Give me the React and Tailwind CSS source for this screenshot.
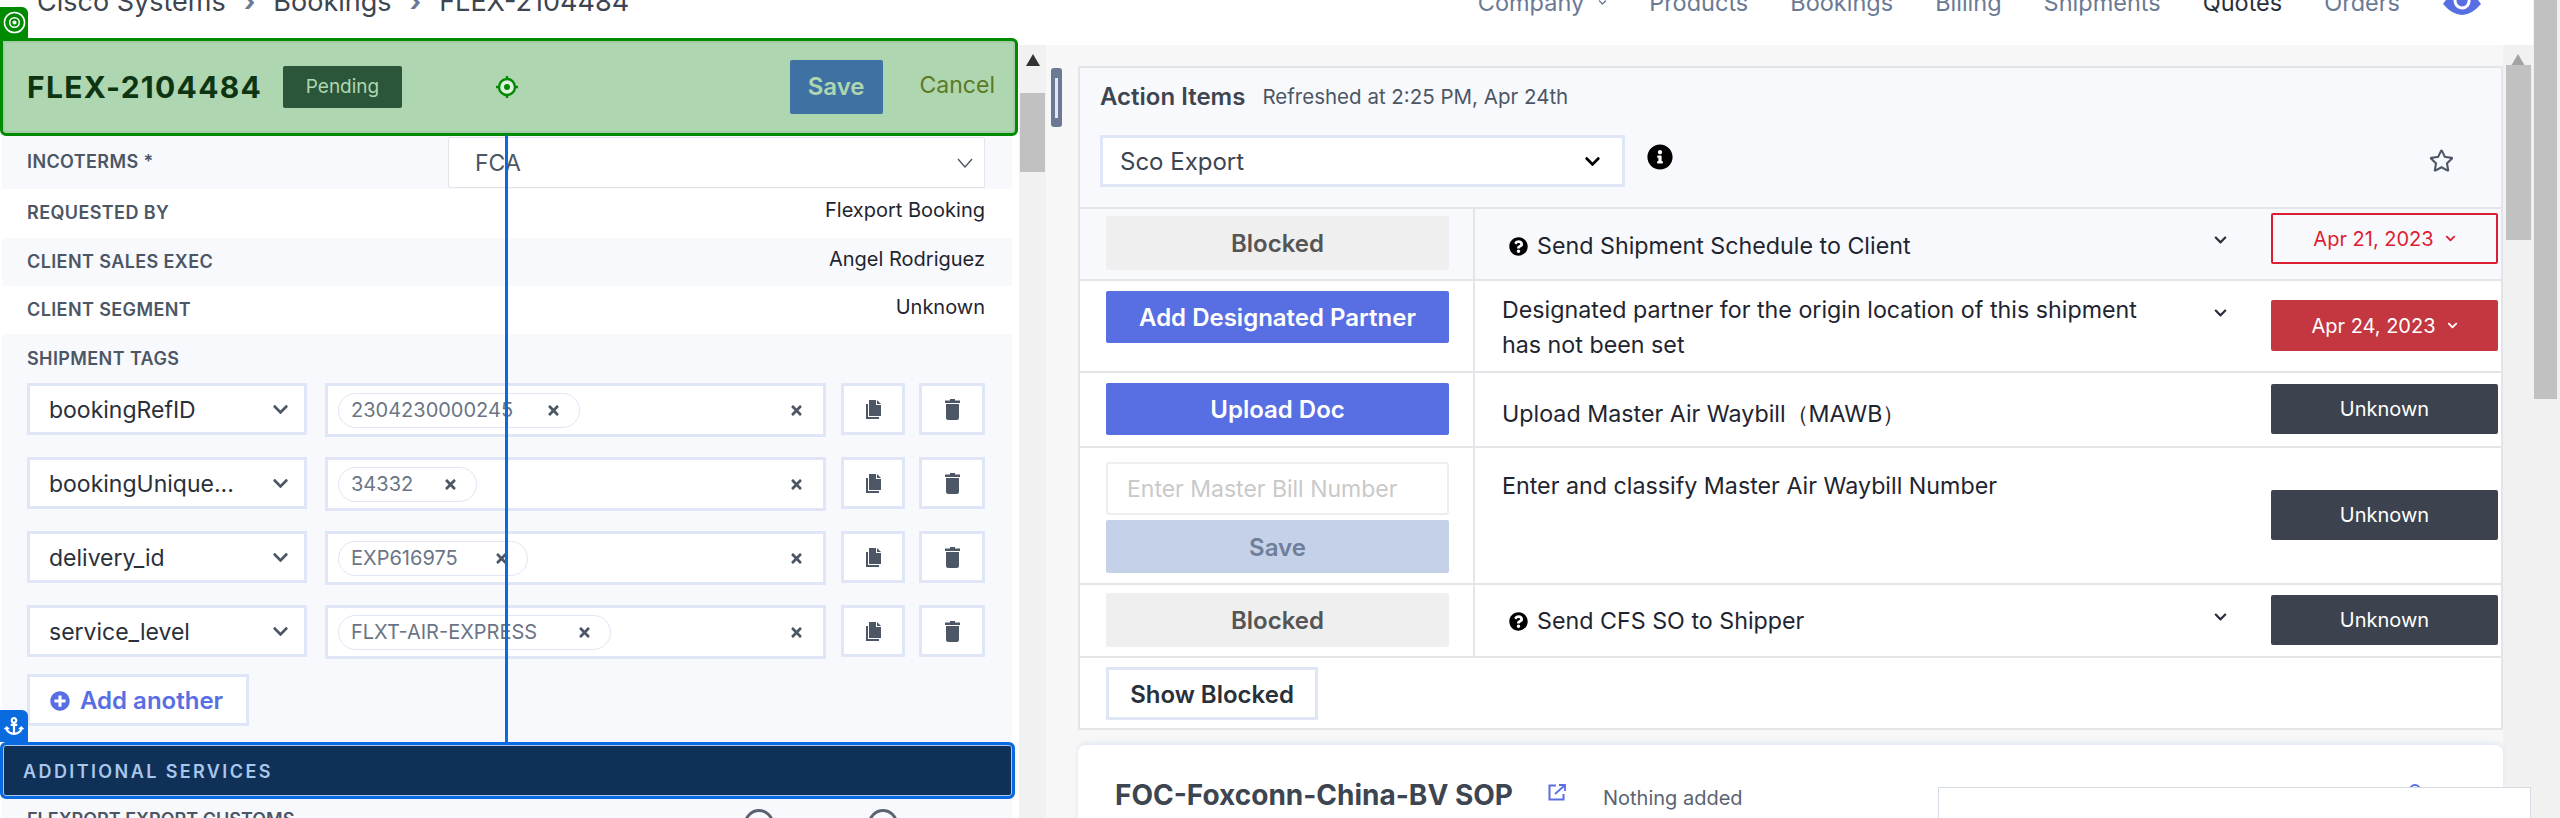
import { FaAnchor, FaChevronDown, FaInfoCircle, FaPlusCircle, FaQuestionCircle, FaRegStar, FaTimes } from 'react-icons/fa';

const navItems = ['Products', 'Bookings', 'Billing', 'Shipments'];

const tagRows = [
    { name: 'bookingRefID', value: '2304230000245', chip: 'w-[242px]' },
    { name: 'bookingUnique...', value: '34332', chip: 'w-[139px]' },
    { name: 'delivery_id', value: 'EXP616975', chip: 'w-[190px]' },
    { name: 'service_level', value: 'FLXT-AIR-EXPRESS', chip: 'w-[273px]' },
];

function Thin({ className = '' }) {
    return (
        <svg viewBox="0 0 16 10" className={className} fill="none" stroke="currentColor" strokeWidth="1.4">
            <path d="M1 1l7 8 7-8" />
        </svg>
    );
}

function Target({ className = '' }) {
    return (
        <svg viewBox="0 0 24 24" className={className} fill="none" stroke="currentColor">
            <circle cx="12" cy="12" r="8" strokeWidth="2.4" fill="#dff0df" />
            <circle cx="12" cy="12" r="3" fill="currentColor" stroke="none" />
            <path d="M12 1v3M12 20v3M1 12h3M20 12h3" strokeWidth="2.4" />
        </svg>
    );
}

function Rings({ className = '' }) {
    return (
        <svg viewBox="0 0 24 24" className={className} fill="none" stroke="currentColor" strokeWidth="1.6">
            <circle cx="12" cy="12" r="10.5" />
            <circle cx="12" cy="12" r="5" />
            <circle cx="12" cy="12" r="1.4" fill="currentColor" />
        </svg>
    );
}

function ExternalLink({ className = '' }) {
    return (
        <svg viewBox="0 0 18 17" className={className} fill="none" stroke="currentColor" strokeWidth="2">
            <path d="M8 1.500H1.500v14h14V10" />
            <path d="M7 10l9-8M11 1h6v6" strokeWidth="1.800" />
        </svg>
    );
}

function CopyIcon({ className = '' }) {
    return (
        <svg viewBox="0 0 15 19" className={className} fill="currentColor">
            <path d="M0 4h2v13h11v2H0z" />
            <path d="M3 0h7v5h5v11H3z" />
            <path d="M11 0l4 4h-4z" />
        </svg>
    );
}

function TrashIcon({ className = '' }) {
    return (
        <svg viewBox="0 0 15 21" className={className} fill="currentColor">
            <path d="M5 0h5v1.500h5v2.500H0V1.500h5z" />
            <path d="M1 5h13v13.500a2.500 2.500 0 0 1-2.500 2.500h-8A2.500 2.500 0 0 1 1 18.500z" />
        </svg>
    );
}

function EyeAvatar({ className = '' }) {
    return (
        <svg viewBox="0 0 38 28" className={className}>
            <path d="M0 17Q19 -11 38 17 Q19 39 0 17z" fill="#586ee3" />
            <path d="M26 13a7 7 0 1 1-6-6" fill="none" stroke="#ffffff" strokeWidth="3" />
        </svg>
    );
}

function DetailRow({ label, value, tint, height }) {
    return (
        <div className={`flex items-start justify-between pl-[25px] pr-[27px] ${height} ${tint ? 'bg-[#f7f9fd]' : 'bg-white'}`}>
            <span className="pt-[13px] text-[18px] leading-[22px] font-semibold tracking-[0.4px] text-[#4c5664]">{label}</span>
            <span className="pt-[9px] text-[20px] leading-[24px] text-[#1f2530]">{value}</span>
        </div>
    );
}

function TagRow({ row }) {
    return (
        <div className="flex h-[74px] items-start">
            <div className="flex h-[52px] w-[280px] items-center justify-between border-[3px] border-[#dfe6f5] bg-white pl-[19px] pr-[15px] text-[23px] text-[#2a303a]">
                <span className="pt-[2px]">{row.name}</span>
                <FaChevronDown className="h-[17px] w-[17px] text-[#4c5664]" />
            </div>
            <div className="ml-[18px] flex h-[54px] w-[501px] items-center justify-between border-[3px] border-[#dfe6f5] bg-white pl-[10px] pr-[19px]">
                <span className={`flex h-[35px] items-center justify-between rounded-full border border-[#dfe6f5] pl-[12px] pr-[18px] text-[20px] text-[#6b7585] ${row.chip}`}>
                    {row.value}
                    <FaTimes className="h-[15px] w-[15px] text-[#4c5664]" />
                </span>
                <FaTimes className="h-[15px] w-[15px] text-[#4c5664]" />
            </div>
            <div className="ml-[15px] flex h-[52px] w-[64px] items-center justify-center border-[3px] border-[#dfe6f5] bg-white">
                <CopyIcon className="h-[19px] w-[15px] text-[#4c5664]" />
            </div>
            <div className="ml-[14px] flex h-[52px] w-[66px] items-center justify-center border-[3px] border-[#dfe6f5] bg-white">
                <TrashIcon className="h-[21px] w-[15px] text-[#4c5664]" />
            </div>
        </div>
    );
}

function LeftPanel() {
    return (
        <div className="relative w-[1019px] shrink-0">
            {/* selection overlay tabs and guide line */}
            <div className="absolute -top-[38px] left-0 flex h-[31px] w-[28px] items-center justify-center rounded-tr-[6px] bg-[#008a00] text-white">
                <Rings className="h-[23px] w-[23px]" />
            </div>
            <div className="absolute top-[90px] left-[505px] z-20 h-[607px] w-[3px] bg-[#0a6ae0]" />
            <div className="absolute top-[665px] left-0 flex h-[32px] w-[28px] items-center justify-center rounded-tr-[6px] bg-[#0a6ae0] text-white">
                <FaAnchor className="h-[20px] w-[20px]" />
            </div>

            <div className="relative z-10 -mt-[7px] flex h-[98px] w-[1018px] items-center rounded-r-[6px] rounded-bl-[6px] border-[3px] border-[#008a00] bg-[#aed6b1] pl-[24px] pr-[20px] shadow-[inset_0_0_0_2px_#a3cca6]">
                <span className="w-[234px] text-[30px] font-bold tracking-[1.3px] whitespace-nowrap text-[#0e3511]">FLEX-2104484</span>
                <span className="ml-[22px] flex h-[42px] w-[119px] items-center justify-center rounded-[2px] bg-[#2b563a] text-[19px] text-[#aed6b1]">Pending</span>
                <Target className="ml-[93px] h-[24px] w-[24px] text-[#008a00]" />
                <span className="ml-auto flex h-[54px] w-[93px] items-center justify-center rounded-[2px] bg-[#3f72a3] text-[24px] font-semibold text-[#aed6b1]">Save</span>
                <span className="ml-[37px] -mt-[4px] text-[23px] text-[#5d7a1f]">Cancel</span>
            </div>

            <div className="ml-[2px] w-[1010px]">
                <div className="flex h-[53px] items-start justify-between bg-[#f7f9fd] pl-[25px] pr-[27px]">
                    <span className="pt-[15px] text-[18px] leading-[22px] font-semibold tracking-[0.4px] text-[#4c5664]">INCOTERMS *</span>
                    <div className="mt-[1px] flex h-[51px] w-[537px] items-center justify-between rounded-[2px] border border-[#e3e5ea] bg-white pl-[26px] pr-[11px] text-[23px] text-[#4c5664]">
                        <span className="pt-[2px]">FCA</span>
                        <Thin className="h-[10px] w-[16px]" />
                    </div>
                </div>
                <DetailRow label="REQUESTED BY" value="Flexport Booking" height="h-[49px]" />
                <DetailRow label="CLIENT SALES EXEC" value="Angel Rodriguez" tint height="h-[48px]" />
                <DetailRow label="CLIENT SEGMENT" value="Unknown" height="h-[48px]" />
                <div className="h-[408px] bg-[#f7f9fd] pl-[25px]">
                    <div className="h-[49px] pt-[14px] text-[18px] leading-[22px] font-semibold tracking-[0.4px] text-[#4c5664]">SHIPMENT TAGS</div>
                    {tagRows.map((row) => (
                        <TagRow key={row.name} row={row} />
                    ))}
                    <button className="-mt-[5px] flex h-[52px] w-[222px] items-center gap-[10px] border-[3px] border-[#dfe6f5] bg-white pl-[20px] pt-[2px] text-[24px] font-semibold text-[#586ee3]">
                        <FaPlusCircle className="h-[20px] w-[20px]" />
                        Add another
                    </button>
                </div>
            </div>

            <div className="relative z-10 flex h-[57px] w-[1015px] items-center rounded-[6px] border-[3px] border-[#0a6ae0] bg-[#0f3057] pl-[20px] pt-[2px] shadow-[inset_0_0_0_1px_#a9c6ec] text-[18px] font-semibold tracking-[2.4px] text-[#a9c6ec]">
                ADDITIONAL SERVICES
            </div>
            <div className="ml-[2px] flex h-[40px] w-[1010px] items-start bg-[#f7f9fd] pl-[25px] pt-[10px]">
                <span className="w-[717px] text-[18px] leading-[22px] font-semibold text-[#4c5664]">FLEXPORT EXPORT CUSTOMS</span>
                <span className="h-[30px] w-[30px] rounded-full border-[3px] border-[#5a6372]" />
                <span className="ml-[94px] flex h-[30px] w-[30px] items-center justify-center rounded-full border-[3px] border-[#5a6372]">
                    <span className="h-[12px] w-[12px] rounded-full bg-[#5a6372]" />
                </span>
            </div>
        </div>
    );
}

function Status({ date, solid, offset }) {
    if (date) {
        return (
            <div className={`flex h-[51px] w-[227px] items-center justify-center gap-[11px] rounded-[2px] text-[20px] ${offset} ${solid ? 'bg-[#c43741] text-white' : 'border-2 border-[#dc1e32] text-[#dc1e32]'}`}>
                {date}
                <FaChevronDown className="h-[11px] w-[11px]" />
            </div>
        );
    }
    return (
        <div className={`flex h-[50px] w-[227px] items-center justify-center rounded-[2px] bg-[#3c434e] text-[20px] text-white ${offset}`}>
            Unknown
        </div>
    );
}

function ActionRow({ height, tint, left, children, chevronTop, status }) {
    return (
        <div className={`flex border-t-2 border-[#e4e5e8] ${height} ${tint ? 'bg-[#f8f9fd]' : 'bg-white'}`}>
            <div className="w-[395px] shrink-0 border-r-2 border-[#e4e5e8] pl-[26px]">{left}</div>
            <div className="relative w-[796px] shrink-0 pl-[27px]">
                {children}
                {chevronTop && <FaChevronDown className={`absolute left-[738px] h-[14px] w-[15px] text-[#2a303a] ${chevronTop}`} />}
            </div>
            {status}
        </div>
    );
}

function BigButton({ className = '', children }) {
    return (
        <div className={`flex w-[343px] items-center justify-center rounded-[2px] pt-[2px] text-[24px] font-semibold ${className}`}>
            {children}
        </div>
    );
}

function BlockedText({ className = '', children }) {
    return (
        <div className={`flex items-center pl-[7px] text-[23.25px] leading-[30px] text-[#1f2530] ${className}`}>
            <FaQuestionCircle className="mr-[9px] h-[19px] w-[19px] text-black" />
            {children}
        </div>
    );
}

function ActionPane() {
    return (
        <div className="flex w-[1457px] shrink-0 flex-col bg-[#f7f7f7] pl-[32px] pt-[21px]">
            <div className="h-[664px] w-[1425px] border-2 border-[#e4e5e8] bg-white">
                <div className="h-[139px] bg-[#f8f9fd] pl-[20px] pr-[47px]">
                    <div className="flex h-[57px] items-center">
                        <span className="text-[24px] font-semibold text-[#3d4550]">Action Items</span>
                        <span className="ml-[17px] pt-[2px] text-[20.5px] text-[#4c5664]">Refreshed at 2:25 PM, Apr 24th</span>
                    </div>
                    <div className="mt-[10px] flex items-start">
                        <div className="flex h-[52px] w-[525px] items-center justify-between border-[3px] border-[#dfe6f5] bg-white pl-[17px] pr-[20px] text-[24px] text-[#3d4550]">
                            <span className="pt-[2px]">Sco Export</span>
                            <FaChevronDown className="h-[17px] w-[19px] text-black" />
                        </div>
                        <FaInfoCircle className="ml-[22px] mt-[9px] h-[26px] w-[26px] text-black" />
                        <FaRegStar className="ml-auto mt-[13px] h-[25px] w-[25px] text-[#4c5664]" />
                    </div>
                </div>

                <ActionRow
                    height="h-[72px]"
                    tint
                    chevronTop="top-[24px]"
                    left={<BigButton className="mt-[7px] h-[54px] bg-[#efefef] text-[#555555]">Blocked</BigButton>}
                    status={<Status date="Apr 21, 2023" offset="mt-[4px]" />}
                >
                    <BlockedText className="pt-[22px]">Send Shipment Schedule to Client</BlockedText>
                </ActionRow>
                <ActionRow
                    height="h-[92px]"
                    chevronTop="top-[25px]"
                    left={<BigButton className="mt-[10px] h-[52px] bg-[#586ee3] text-white">Add Designated Partner</BigButton>}
                    status={<Status date="Apr 24, 2023" solid offset="mt-[19px]" />}
                >
                    <p className="w-[655px] pt-[11px] text-[23.25px] leading-[35px] text-[#1f2530]">
                        Designated partner for the origin location of this shipment has not been set
                    </p>
                </ActionRow>
                <ActionRow
                    height="h-[75px]"
                    left={<BigButton className="mt-[10px] h-[52px] bg-[#586ee3] text-white">Upload Doc</BigButton>}
                    status={<Status offset="mt-[11px]" />}
                >
                    <p className="pt-[23px] text-[23.25px] leading-[35px] text-[#1f2530]">Upload Master Air Waybill（MAWB）</p>
                </ActionRow>
                <ActionRow
                    height="h-[137px]"
                    left={
                        <div>
                            <div className="mt-[14px] flex h-[53px] w-[343px] items-center rounded-[3px] border-2 border-[#eeeeee] bg-white pl-[19px] pt-[2px] text-[23px] text-[#c9c9c9]">
                                Enter Master Bill Number
                            </div>
                            <BigButton className="mt-[5px] h-[53px] bg-[#c5d1e8] text-[#6f7f9a]">Save</BigButton>
                        </div>
                    }
                    status={<Status offset="mt-[42px]" />}
                >
                    <p className="pt-[20px] text-[23.25px] leading-[35px] text-[#1f2530]">Enter and classify Master Air Waybill Number</p>
                </ActionRow>
                <ActionRow
                    height="h-[73px]"
                    chevronTop="top-[25px]"
                    left={<BigButton className="mt-[8px] h-[54px] bg-[#efefef] text-[#555555]">Blocked</BigButton>}
                    status={<Status offset="mt-[10px]" />}
                >
                    <BlockedText className="pt-[21px]">Send CFS SO to Shipper</BlockedText>
                </ActionRow>
                <div className="border-t-2 border-[#e4e5e8] pl-[26px] pt-[9px]">
                    <div className="flex h-[53px] w-[212px] items-center justify-center border-[3px] border-[#dfe6f5] pt-[2px] text-[24px] font-semibold text-[#2a303a]">
                        Show Blocked
                    </div>
                </div>
            </div>

            <div className="relative mt-[15px] flex h-[100px] w-[1425px] items-start rounded-t-[8px] bg-white pl-[37px] pt-[29px] shadow-[0_-2px_5px_#dfe6f5]">
                <span className="text-[28px] font-bold text-[#3d4550]">FOC-Foxconn-China-BV SOP</span>
                <ExternalLink className="ml-[35px] mt-[10px] h-[17px] w-[18px] text-[#586ee3]" />
                <span className="ml-[37px] mt-[9px] text-[20px] text-[#5a6372]">Nothing added</span>
                <span className="absolute top-[39px] left-[1331px] h-[12px] w-[12px] rounded-full border-2 border-[#586ee3]" />
                <div className="absolute top-[42px] left-[860px] h-[80px] w-[593px] border border-[#d5dbe3] bg-white" />
            </div>
        </div>
    );
}

function ScrollTrack({ width, thumb, arrow, thumbMargin }) {
    return (
        <div className={`flex h-full shrink-0 flex-col items-center bg-[#f1f1f1] ${width}`}>
            <span className="mt-[9px] h-0 w-0 border-x-[7px] border-b-[12px] border-x-transparent" style={{ borderBottomColor: arrow }} />
            <div className={`bg-[#c1c1c1] ${thumb} ${thumbMargin}`} />
        </div>
    );
}

export default function App() {
    return (
        <div className="relative flex h-[818px] w-[2560px] overflow-hidden bg-white font-['Inter',sans-serif]">
            <div className="w-[2533px] shrink-0">
                <header className="flex h-[45px] items-start overflow-hidden bg-white">
                    <div className="-mt-[18px] flex w-full items-center pl-[37px] pr-[52px]">
                        <span className="flex items-center text-[27px] text-[#3d4550]">
                            Cisco Systems
                            <span className="mx-[18px] font-bold text-[#6b7a94]">›</span>
                            Bookings
                            <span className="mx-[18px] font-bold text-[#6b7a94]">›</span>
                            FLEX-2104484
                        </span>
                        <nav className="ml-auto flex items-center text-[23.5px] text-[#6b7a94]">
                            <span>Company</span>
                            <FaChevronDown className="ml-[14px] h-[9px] w-[9px]" />
                            {navItems.map((item) => (
                                <span key={item} className="ml-[42px]">{item}</span>
                            ))}
                            <span className="ml-[42px] text-[#2a303a]">Quotes</span>
                            <span className="ml-[42px]">Orders</span>
                            <EyeAvatar className="-mt-[2px] ml-[43px] h-[28px] w-[38px]" />
                        </nav>
                    </div>
                </header>
                <div className="flex h-[773px] items-start">
                    <LeftPanel />
                    <ScrollTrack width="w-[27px]" arrow="#333333" thumb="h-[79px] w-[25px]" thumbMargin="mt-[27px]" />
                    <ActionPane />
                    <ScrollTrack width="w-[30px]" arrow="#a3a3a3" thumb="h-[175px] w-[25px]" thumbMargin="mt-[-1px]" />
                </div>
            </div>
            <div className="flex-1 bg-[#f1f1f1] pl-[1px]">
                <div className="h-[399px] w-[23px] bg-[#c1c1c1]" />
            </div>
            {/* floating thumb between the two panes */}
            <div className="absolute top-[68px] left-[1051px] flex h-[59px] w-[11px] items-center justify-center rounded-[3px] bg-[#6b7a94]">
                <span className="h-[40px] w-[3px] bg-[#dfe6f5]" />
            </div>
        </div>
    );
}
